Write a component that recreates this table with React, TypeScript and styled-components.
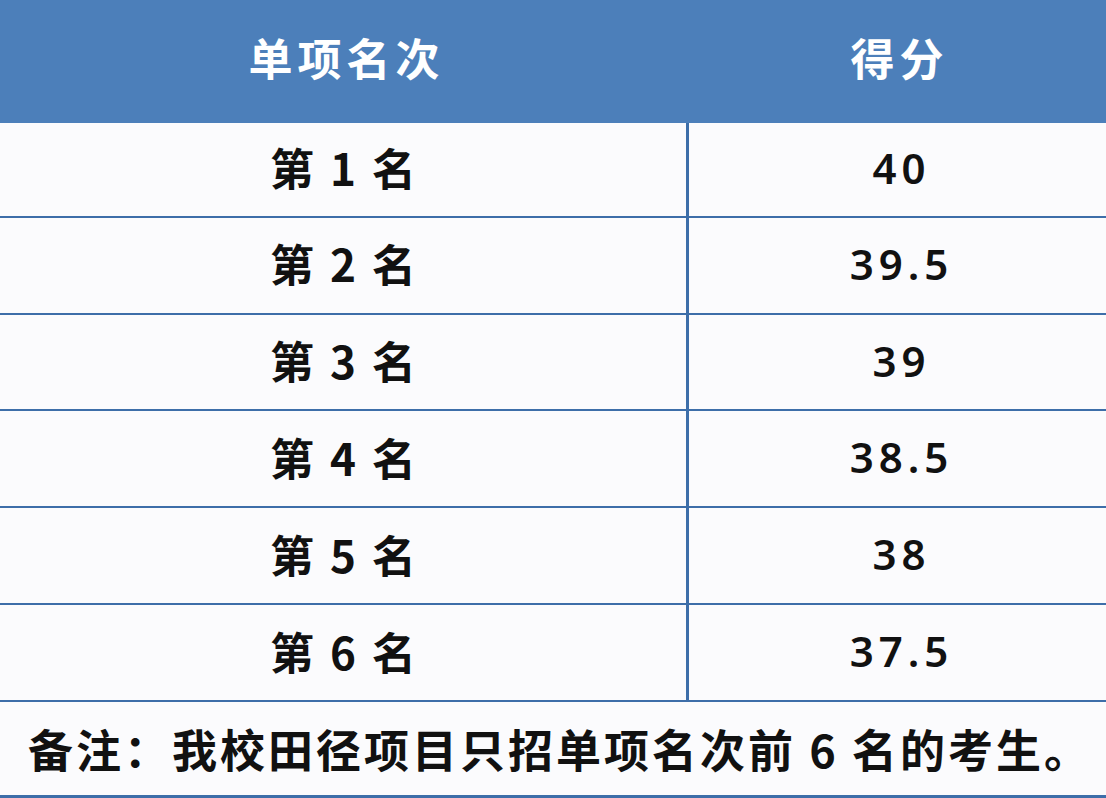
import React from 'react';
import styled, { createGlobalStyle } from 'styled-components';

const Global = createGlobalStyle`
  html, body {
    margin: 0;
    padding: 0;
    background: #fbfbfd;
  }
  body {
    font-family: "Noto Sans CJK SC", "Noto Sans", sans-serif;
  }
`;

const Table = styled.div`
  width: 1106px;
  height: 798px;
  display: flex;
  flex-direction: column;
  background: #fbfbfd;
`;

const Header = styled.div`
  height: 123px;
  display: grid;
  grid-template-columns: 688px 1fr;
  background: #4c7fba;
  color: #ffffff;
`;

const HeadCell = styled.div`
  display: flex;
  align-items: center;
  justify-content: center;
  font-size: 44px;
  font-weight: 700;
  letter-spacing: 5px;
  padding-bottom: 8px;
  padding-left: 5px;
`;

const Row = styled.div<{ $first?: boolean }>`
  height: ${(p) => (p.$first ? 93 : 95)}px;
  display: grid;
  grid-template-columns: 686px 3px 1fr;
  border-bottom: 2px solid #3d6ea9;
`;

const Divider = styled.div`
  background: #3d6ea9;
`;

const Cell = styled.div`
  display: flex;
  align-items: center;
  justify-content: center;
  font-size: 44px;
  font-weight: 700;
  color: #111111;
  white-space: pre;
  padding-bottom: 4px;
  word-spacing: 6px;
`;

const Score = styled(Cell)`
  font-family: "Noto Sans", "Noto Sans CJK SC", sans-serif;
  font-weight: 600;
  font-size: 42px;
  letter-spacing: 5px;
  padding-left: 8px;
`;

const Note = styled.div`
  height: 93px;
  display: flex;
  align-items: center;
  padding-left: 28px;
  font-size: 45px;
  font-weight: 700;
  letter-spacing: 3px;
  color: #111111;
  border-bottom: 3px solid #3d6ea9;
  white-space: pre;
`;

const rows = [
  ['1', '40'],
  ['2', '39.5'],
  ['3', '39'],
  ['4', '38.5'],
  ['5', '38'],
  ['6', '37.5'],
];

export default function App() {
  return (
    <>
      <Global />
      <Table>
        <Header>
          <HeadCell>单项名次</HeadCell>
          <HeadCell>得分</HeadCell>
        </Header>
        {rows.map(([rank, score], i) => (
          <Row key={rank} $first={i === 0}>
            <Cell>{`第 ${rank} 名`}</Cell>
            <Divider />
            <Score>{score}</Score>
          </Row>
        ))}
        <Note>{'备注：我校田径项目只招单项名次前 6 名的考生。'}</Note>
      </Table>
    </>
  );
}
